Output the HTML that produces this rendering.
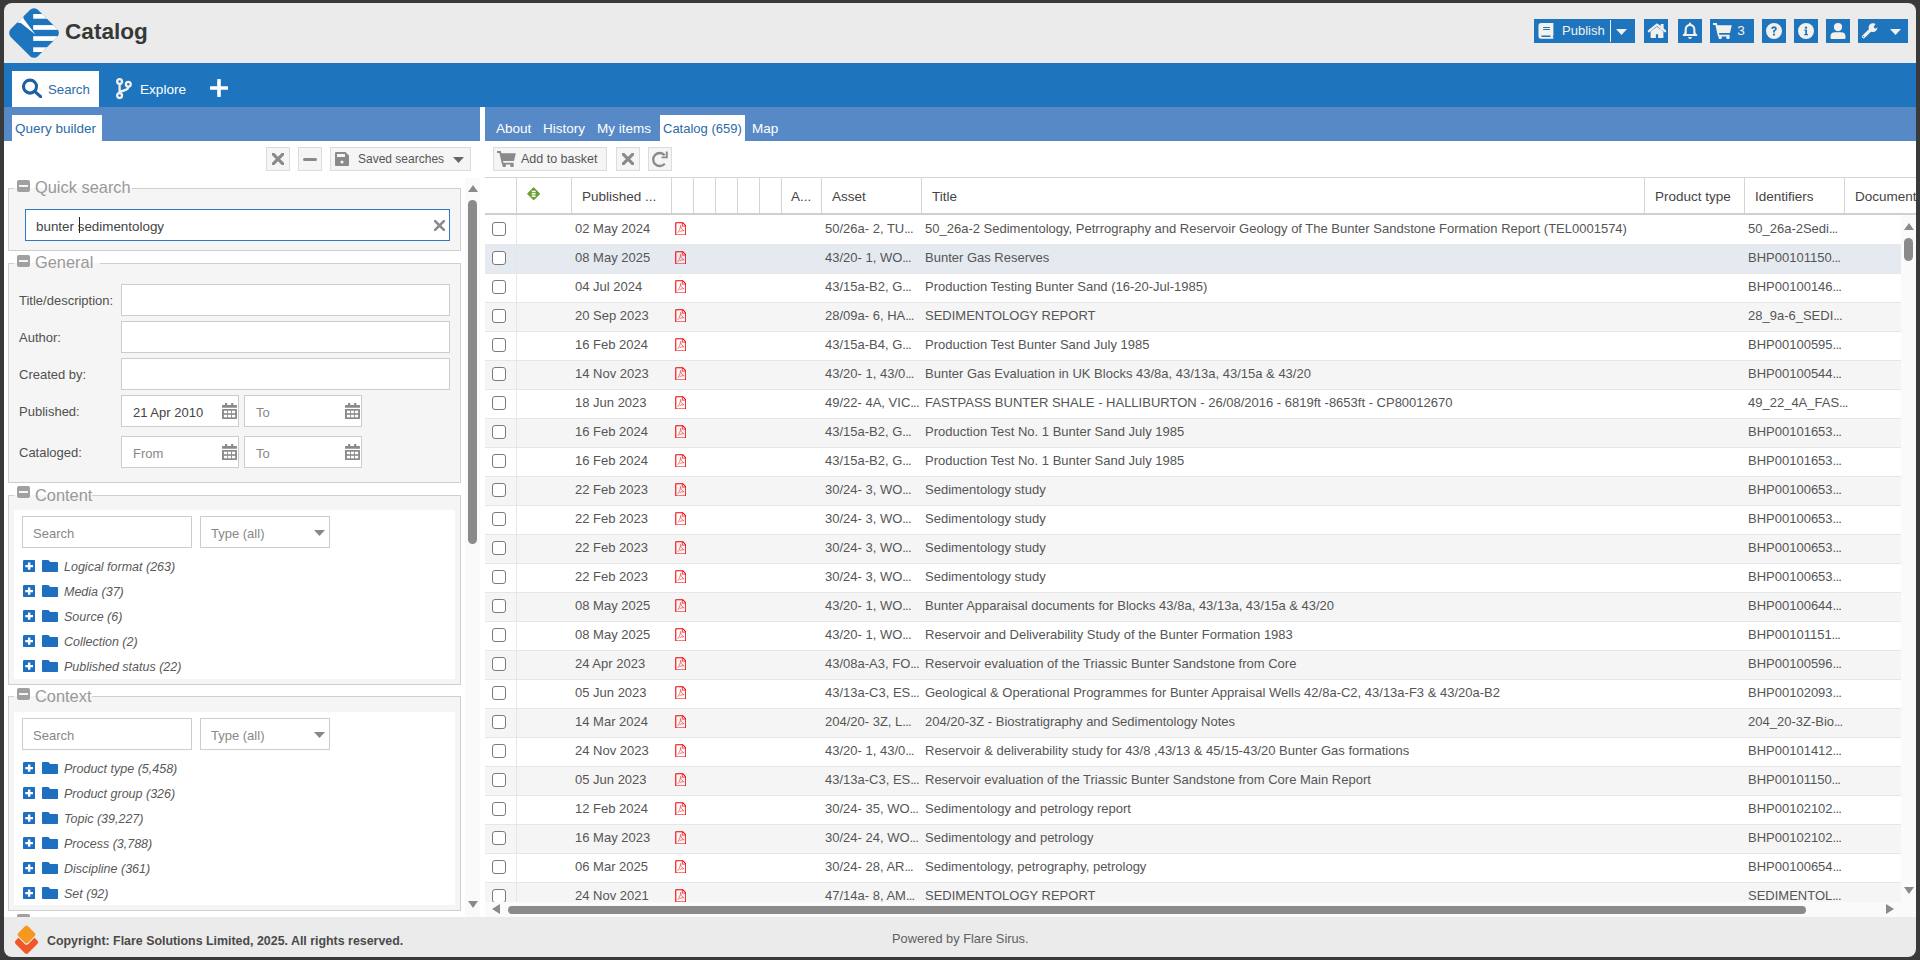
<!DOCTYPE html><html><head><meta charset="utf-8"><title>Catalog</title><style>
*{box-sizing:border-box;margin:0;padding:0}
html,body{width:1920px;height:960px;overflow:hidden}
body{position:relative;background:#fff;font-family:"Liberation Sans",sans-serif;font-size:13px;color:#444}
.a{position:absolute}
.t{position:absolute;white-space:nowrap;line-height:1}
.frame{position:absolute;left:4px;top:3px;width:1912px;height:954px;border-radius:8px;box-shadow:0 0 0 60px #3a3a3a;z-index:1000;pointer-events:none}
.hbtn{position:absolute;top:19px;height:24px;background:#1f74be}
.gbtn{position:absolute;top:147px;height:24px;background:#f5f5f5;border:1px solid #dcdcdc}
.fs{position:absolute;background:#f5f5f5;border:1px solid #cfcfcf}
.leg{position:absolute;color:#999;font-size:16.4px;line-height:1;white-space:nowrap}
.minus{position:absolute;width:13px;height:12px;background:#a0a0a0;border-radius:2px}
.minus:after{content:"";position:absolute;left:2px;top:5px;width:9px;height:2px;background:#f5f5f5}
.inp{position:absolute;background:#fff;border:1px solid #cccccc}
.lbl{position:absolute;white-space:nowrap;line-height:1;color:#505050}
.row{position:absolute;left:485px;width:1416px;height:29px}
.cb{position:absolute;left:7px;top:7px;width:14px;height:14px;border:1px solid #7a7a7a;border-radius:3px;background:#fff}
.cell{position:absolute;top:6px;white-space:nowrap;line-height:15px;color:#555}
.el{letter-spacing:-0.8px}
.hd{position:absolute;top:178px;height:35px;border-left:1px solid #d4d4d4}
.hdt{position:absolute;top:11px;white-space:nowrap;line-height:15px;color:#444;font-size:13.5px}
.ti{position:absolute;height:25px}
.tt{position:absolute;left:64px;top:5px;font-style:italic;color:#5a5a5a;white-space:nowrap;line-height:15px;font-size:12.5px}
</style></head><body>
<div class="frame"></div>
<div class="a " style="left:0px;top:0px;width:1920px;height:63px;background:#ebebeb"></div>
<div class="a" style="left:6px;top:5px;width:56px;height:56px"><svg width="56" height="56" viewBox="0 0 56 56"><defs><clipPath id="lc"><rect x="-19.2" y="-19.2" width="38.4" height="38.4" rx="5.5" transform="translate(28,28) rotate(45)"/></clipPath></defs>
<g clip-path="url(#lc)"><rect x="0" y="0" width="56" height="56" fill="#1f74be"/>
<g fill="#fff"><rect x="27.2" y="9" width="30" height="4.7"/><rect x="27.2" y="20.1" width="30" height="4.7"/><rect x="27.2" y="31.2" width="30" height="4.7"/><rect x="27.2" y="42.3" width="30" height="4.7"/></g>
<path d="M10.5 17.2 L17.2 10.5 L17.6 13.8 L29.4 29.4 L15.2 18.2 Z" fill="#fff"/></g>
</svg></div>
<div class="t" style="left:65px;top:20.5px;font-size:22.6px;font-weight:bold;color:#383838">Catalog</div>
<div class="hbtn" style="left:1534px;width:101px"><svg class="a" style="left:0;top:0" width="24" height="24" viewBox="0 0 24 24"><path d="M7 4 H19.4 V16.4 Q18.9 16.7 18.9 17.5 Q18.9 18.3 19.4 18.6 V19.8 H7 Q4.5 19.8 4.5 17.3 V6.5 Q4.5 4 7 4 Z" fill="#f3f1ec"/><rect x="9" y="8" width="7" height="1.1" rx="0.55" fill="#1f74be"/><rect x="9" y="10" width="7" height="1.1" rx="0.55" fill="#1f74be"/><rect x="7.3" y="16.4" width="9.3" height="1.5" rx="0.7" fill="#1f74be"/></svg><div class="t" style="left:28px;top:5px;font-size:13px;color:#f3f1ec">Publish</div><div class="a" style="left:76px;top:1px;width:1px;height:22px;background:#f3f1ec"></div><svg class="a" style="left:82px;top:10px" width="11" height="6" viewBox="0 0 11 6"><path d="M0 0 H11 L5.5 6 Z" fill="#f3f1ec"/></svg></div>
<div class="hbtn" style="left:1644px;width:24px"><svg class="a" style="left:0;top:0" width="24" height="24" viewBox="0 0 24 24"><rect x="16.6" y="5" width="3" height="5.5" fill="#f3f1ec"/><path d="M4.9 12.2 L13 5.6 L21.1 12.2" fill="none" stroke="#f3f1ec" stroke-width="2.3" stroke-linecap="round" stroke-linejoin="round"/><path d="M6.6 12.6 L13 7.7 L19.4 12.6 V19 H14.1 V15.2 H11.9 V19 H6.6 Z" fill="#f3f1ec"/></svg></div>
<div class="hbtn" style="left:1678px;width:24px"><svg class="a" style="left:0;top:0" width="24" height="24" viewBox="0 0 24 24"><path d="M12 3.6 Q13.2 3.6 13.2 5 Q17.2 6 17.4 10.5 V13 Q17.6 14.6 19.2 15.6 V17 H4.8 V15.6 Q6.4 14.6 6.6 13 V10.5 Q6.8 6 10.8 5 Q10.8 3.6 12 3.6 Z M8.6 15 H15.4 Q15.2 14 15.3 13 V10.6 Q15.2 7.1 12 7.1 Q8.8 7.1 8.7 10.6 V13 Q8.8 14 8.6 15 Z" fill="#f3f1ec" fill-rule="evenodd"/><path d="M10 18 H14 Q13.5 20 12 20 Q10.5 20 10 18 Z" fill="#f3f1ec"/></svg></div>
<div class="hbtn" style="left:1710px;width:44px"><svg class="a" style="left:3px;top:4px" width="19" height="16" viewBox="0 0 19 16"><path d="M0 0 H3.8 L4.4 2.2 H18.8 L17 10 H6 L6.4 11.8 H16.6 V13.6 H5 L2.4 1.9 H0 Z" fill="#f3f1ec"/><circle cx="7.2" cy="14.4" r="1.7" fill="#f3f1ec"/><circle cx="15" cy="14.4" r="1.7" fill="#f3f1ec"/></svg><div class="t" style="left:27.3px;top:5px;font-size:13.6px;color:#f3f1ec">3</div></div>
<div class="hbtn" style="left:1762px;width:24px"><svg class="a" style="left:4px;top:4px" width="16" height="16" viewBox="0 0 16 16"><circle cx="8" cy="8" r="8" fill="#f3f1ec"/><path d="M5.3 6 Q5.3 3.3 8 3.3 Q10.8 3.3 10.8 5.8 Q10.8 7.3 9.2 8 Q8.9 8.2 8.9 8.9 V9.6 H7 V8.7 Q7 7.3 8.3 6.7 Q9 6.4 9 5.8 Q9 5 8 5 Q7.1 5 7.1 6 Z" fill="#1f74be"/><rect x="7" y="10.6" width="1.9" height="1.9" fill="#1f74be"/></svg></div>
<div class="hbtn" style="left:1794px;width:24px"><svg class="a" style="left:4px;top:4px" width="16" height="16" viewBox="0 0 16 16"><circle cx="8" cy="8" r="8" fill="#f3f1ec"/><circle cx="8" cy="4.6" r="1.2" fill="#1f74be"/><path d="M6.3 6.6 H9 V11 H10 V12.3 H6.3 V11 H7.3 V7.8 H6.3 Z" fill="#1f74be"/></svg></div>
<div class="hbtn" style="left:1826px;width:24px"><svg class="a" style="left:4px;top:4px" width="16" height="16" viewBox="0 0 16 16"><circle cx="8" cy="4.1" r="4.1" fill="#f3f1ec"/><path d="M0.5 15 V13.5 Q0.5 9.2 5 9.2 H11 Q15.5 9.2 15.5 13.5 V15 Q15.5 16 14.5 16 H1.5 Q0.5 16 0.5 15 Z" fill="#f3f1ec"/></svg></div>
<div class="hbtn" style="left:1858px;width:50px"><svg class="a" style="left:3px;top:4px" width="18" height="16" viewBox="0 0 18 16"><path d="M2.6 13.6 L9.8 6.6" stroke="#f3f1ec" stroke-width="3.4" stroke-linecap="round"/><circle cx="12" cy="4.6" r="4.4" fill="#f3f1ec"/><path d="M12.6 3.9 L15.6 -0.6 L19 2.8 L14.3 5.8 Z" fill="#1f74be"/><circle cx="2.6" cy="13.6" r="0.6" fill="#1f74be"/></svg><svg class="a" style="left:32px;top:10px" width="11" height="6" viewBox="0 0 11 6"><path d="M0 0 H11 L5.5 6 Z" fill="#f3f1ec"/></svg></div>
<div class="a " style="left:0px;top:63px;width:1920px;height:44px;background:#1f74be"></div>
<div class="a " style="left:12px;top:71px;width:87px;height:36px;background:#fff"></div>
<svg class="a" style="left:22px;top:78px" width="20" height="20" viewBox="0 0 20 20"><circle cx="8" cy="8.6" r="6.5" fill="none" stroke="#1d5f9f" stroke-width="3.1"/><path d="M13 13.6 L18.6 18.6" stroke="#1d5f9f" stroke-width="3.2" stroke-linecap="round"/></svg>
<div class="t" style="left:48px;top:82.6px;font-size:13.2px;color:#2a6ba8">Search</div>
<svg class="a" style="left:114px;top:76px" width="20" height="24" viewBox="0 0 20 24"><g fill="none" stroke="#f3f1ec" stroke-width="2.3"><circle cx="5.6" cy="5.5" r="2.4"/><circle cx="5.6" cy="19.6" r="2.4"/><circle cx="14.3" cy="8.3" r="2.4"/><path d="M5.6 7.8 V17.2"/><path d="M14.3 10.6 Q14.3 13.6 10 14.5 Q6.5 15.2 5.6 16.8"/></g></svg>
<div class="t" style="left:140px;top:82.6px;font-size:13.6px;color:#fff">Explore</div>
<svg class="a" style="left:210px;top:79px" width="18" height="18" viewBox="0 0 18 18"><path d="M9 1 V17 M1 9 H17" stroke="#fff" stroke-width="3.6" stroke-linecap="round"/></svg>
<div class="a " style="left:0px;top:107px;width:480px;height:34px;background:#5789c6"></div>
<div class="a " style="left:485px;top:107px;width:1435px;height:34px;background:#5789c6"></div>
<div class="a " style="left:12px;top:115px;width:90px;height:26px;background:#fff"></div>
<div class="t" style="left:15px;top:122px;font-size:13.5px;color:#2a6ba8">Query builder</div>
<div class="a " style="left:660px;top:115px;width:85px;height:26px;background:#fff"></div>
<div class="t" style="left:496px;top:122px;font-size:13.5px;color:#fff">About</div>
<div class="t" style="left:543px;top:122px;font-size:13.5px;color:#fff">History</div>
<div class="t" style="left:597px;top:122px;font-size:13.5px;color:#fff">My items</div>
<div class="t" style="left:663px;top:122px;font-size:13px;color:#2a6ba8">Catalog (659)</div>
<div class="t" style="left:752px;top:122px;font-size:13.5px;color:#fff">Map</div>
<div class="gbtn" style="left:266px;width:24px"><svg class="a" style="left:5px;top:5px" width="12" height="12" viewBox="0 0 10 10"><path d="M1 1 L9 9 M9 1 L1 9" stroke="#8a8a8a" stroke-width="2.6" stroke-linecap="round"/></svg></div>
<div class="gbtn" style="left:298px;width:24px"><div class="a" style="left:4px;top:10px;width:14px;height:3px;border-radius:1.5px;background:#8a8a8a"></div></div>
<div class="gbtn" style="left:330px;width:141px"><svg class="a" style="left:4px;top:4px" width="14" height="14" viewBox="0 0 14 14"><path d="M1 0 H10.5 L14 3.5 V13 Q14 14 13 14 H1 Q0 14 0 13 V1 Q0 0 1 0 Z M2 2 V5 H10 V2 Z" fill="#8a8a8a" fill-rule="evenodd"/><circle cx="7" cy="10" r="1.6" fill="#f5f5f5"/></svg><div class="t" style="left:27px;top:5.4px;font-size:12px;color:#555">Saved searches</div><svg class="a" style="left:122px;top:9px" width="11" height="6" viewBox="0 0 11 6"><path d="M0 0 H11 L5.5 6 Z" fill="#666"/></svg></div>
<div class="a " style="left:465px;top:178px;width:15px;height:739px;background:#fafafa"></div>
<svg class="a" style="left:468px;top:185px" width="10" height="7" viewBox="0 0 10 7"><path d="M5 0 L10 7 H0 Z" fill="#8a8a8a"/></svg>
<div class="a " style="left:468px;top:200px;width:9px;height:344px;background:#8a8a8a;border-radius:5px"></div>
<svg class="a" style="left:468px;top:901px" width="10" height="7" viewBox="0 0 10 7"><path d="M0 0 H10 L5 7 Z" fill="#8a8a8a"/></svg>
<div class="fs" style="left:8px;top:188px;width:453px;height:63px"></div><div class="a" style="left:14px;top:188px;width:118px;height:1px;background:#f5f5f5"></div><div class="minus" style="left:17px;top:180px"></div><div class="leg" style="left:35px;top:179px">Quick search</div>
<div class="inp" style="left:25px;top:209px;width:425px;height:32px;border:1px solid #2a7ac4"></div>
<div class="t" style="left:36px;top:220px;font-size:13.4px;color:#444">bunter sedimentology</div>
<div class="a " style="left:79px;top:217px;width:1px;height:16px;background:#222"></div>
<svg class="a" style="left:434px;top:220px" width="11" height="11" viewBox="0 0 10 10"><path d="M1 1 L9 9 M9 1 L1 9" stroke="#8a8a8a" stroke-width="2.4" stroke-linecap="round"/></svg>
<div class="fs" style="left:8px;top:263px;width:453px;height:220px"></div><div class="a" style="left:14px;top:263px;width:86px;height:1px;background:#f5f5f5"></div><div class="minus" style="left:17px;top:255px"></div><div class="leg" style="left:35px;top:254px">General</div>
<div class="inp" style="left:121px;top:284px;width:329px;height:32px"></div>
<div class="lbl" style="left:19px;top:294px">Title/description:</div>
<div class="inp" style="left:121px;top:321px;width:329px;height:32px"></div>
<div class="lbl" style="left:19px;top:331px">Author:</div>
<div class="inp" style="left:121px;top:358px;width:329px;height:32px"></div>
<div class="lbl" style="left:19px;top:368px">Created by:</div>
<div class="lbl" style="left:19px;top:405px">Published:</div>
<div class="inp" style="left:121px;top:395px;width:118px;height:32px"></div>
<div class="inp" style="left:244px;top:395px;width:118px;height:32px"></div>
<div class="t" style="left:133px;top:406px;color:#444">21 Apr 2010</div>
<div class="t" style="left:256px;top:406px;color:#888">To</div>
<svg class="a" style="left:222px;top:403px" width="15" height="16" viewBox="0 0 15 16"><g fill="#8a8a8a"><rect x="3" y="0" width="2.2" height="2.6"/><rect x="9.1" y="0" width="2.2" height="2.6"/><rect x="0" y="2" width="15" height="2.8" rx="0.6"/><rect x="0" y="6.1" width="15" height="9.8" rx="0.6"/></g><g fill="#fff"><rect x="1.9" y="7.7" width="3.2" height="2.5"/><rect x="5.9" y="7.7" width="3.2" height="2.5"/><rect x="10" y="7.7" width="3.2" height="2.5"/><rect x="1.9" y="11.8" width="3.2" height="2.5"/><rect x="5.9" y="11.8" width="3.2" height="2.5"/><rect x="10" y="11.8" width="3.2" height="2.5"/></g></svg>
<svg class="a" style="left:345px;top:403px" width="15" height="16" viewBox="0 0 15 16"><g fill="#8a8a8a"><rect x="3" y="0" width="2.2" height="2.6"/><rect x="9.1" y="0" width="2.2" height="2.6"/><rect x="0" y="2" width="15" height="2.8" rx="0.6"/><rect x="0" y="6.1" width="15" height="9.8" rx="0.6"/></g><g fill="#fff"><rect x="1.9" y="7.7" width="3.2" height="2.5"/><rect x="5.9" y="7.7" width="3.2" height="2.5"/><rect x="10" y="7.7" width="3.2" height="2.5"/><rect x="1.9" y="11.8" width="3.2" height="2.5"/><rect x="5.9" y="11.8" width="3.2" height="2.5"/><rect x="10" y="11.8" width="3.2" height="2.5"/></g></svg>
<div class="lbl" style="left:19px;top:446px">Cataloged:</div>
<div class="inp" style="left:121px;top:436px;width:118px;height:32px"></div>
<div class="inp" style="left:244px;top:436px;width:118px;height:32px"></div>
<div class="t" style="left:133px;top:447px;color:#888">From</div>
<div class="t" style="left:256px;top:447px;color:#888">To</div>
<svg class="a" style="left:222px;top:444px" width="15" height="16" viewBox="0 0 15 16"><g fill="#8a8a8a"><rect x="3" y="0" width="2.2" height="2.6"/><rect x="9.1" y="0" width="2.2" height="2.6"/><rect x="0" y="2" width="15" height="2.8" rx="0.6"/><rect x="0" y="6.1" width="15" height="9.8" rx="0.6"/></g><g fill="#fff"><rect x="1.9" y="7.7" width="3.2" height="2.5"/><rect x="5.9" y="7.7" width="3.2" height="2.5"/><rect x="10" y="7.7" width="3.2" height="2.5"/><rect x="1.9" y="11.8" width="3.2" height="2.5"/><rect x="5.9" y="11.8" width="3.2" height="2.5"/><rect x="10" y="11.8" width="3.2" height="2.5"/></g></svg>
<svg class="a" style="left:345px;top:444px" width="15" height="16" viewBox="0 0 15 16"><g fill="#8a8a8a"><rect x="3" y="0" width="2.2" height="2.6"/><rect x="9.1" y="0" width="2.2" height="2.6"/><rect x="0" y="2" width="15" height="2.8" rx="0.6"/><rect x="0" y="6.1" width="15" height="9.8" rx="0.6"/></g><g fill="#fff"><rect x="1.9" y="7.7" width="3.2" height="2.5"/><rect x="5.9" y="7.7" width="3.2" height="2.5"/><rect x="10" y="7.7" width="3.2" height="2.5"/><rect x="1.9" y="11.8" width="3.2" height="2.5"/><rect x="5.9" y="11.8" width="3.2" height="2.5"/><rect x="10" y="11.8" width="3.2" height="2.5"/></g></svg>
<div class="fs" style="left:8px;top:495px;width:453px;height:190px"></div><div class="a" style="left:14px;top:495px;width:78px;height:1px;background:#f5f5f5"></div><div class="minus" style="left:17px;top:486px"></div><div class="leg" style="left:35px;top:486.5px">Content</div>
<div class="a " style="left:14px;top:510px;width:441px;height:169px;background:#fff"></div>
<div class="inp" style="left:22px;top:516px;width:170px;height:32px"></div><div class="t" style="left:33px;top:527px;color:#888">Search</div>
<div class="inp" style="left:200px;top:516px;width:130px;height:32px"></div><div class="t" style="left:211px;top:527px;color:#888">Type (all)</div><svg class="a" style="left:314px;top:530px" width="11" height="6" viewBox="0 0 11 6"><path d="M0 0 H11 L5.5 6 Z" fill="#888"/></svg>
<div class="ti" style="left:23px;top:560px;width:300px"><svg class="a" style="left:0.2px;top:-0.3px" width="12.3" height="12.2" viewBox="0 0 12.3 12.2"><rect width="12.3" height="12.2" rx="1.3" fill="#1f6fc0"/><path d="M6.15 2.4 V9.8 M2.3 6.1 H10" stroke="#fff" stroke-width="2.4"/></svg><svg class="a" style="left:19px;top:-0.1px" width="16" height="12" viewBox="0 0 16 12"><path d="M0 0.8 Q0 0 0.8 0 H6.4 L8.2 2.1 H15.2 Q16 2.1 16 2.9 V11.2 Q16 12 15.2 12 H0.8 Q0 12 0 11.2 Z" fill="#1f6fc0"/></svg><div class="tt" style="left:41px;top:0px">Logical format (263)</div></div><div class="ti" style="left:23px;top:585px;width:300px"><svg class="a" style="left:0.2px;top:-0.3px" width="12.3" height="12.2" viewBox="0 0 12.3 12.2"><rect width="12.3" height="12.2" rx="1.3" fill="#1f6fc0"/><path d="M6.15 2.4 V9.8 M2.3 6.1 H10" stroke="#fff" stroke-width="2.4"/></svg><svg class="a" style="left:19px;top:-0.1px" width="16" height="12" viewBox="0 0 16 12"><path d="M0 0.8 Q0 0 0.8 0 H6.4 L8.2 2.1 H15.2 Q16 2.1 16 2.9 V11.2 Q16 12 15.2 12 H0.8 Q0 12 0 11.2 Z" fill="#1f6fc0"/></svg><div class="tt" style="left:41px;top:0px">Media (37)</div></div><div class="ti" style="left:23px;top:610px;width:300px"><svg class="a" style="left:0.2px;top:-0.3px" width="12.3" height="12.2" viewBox="0 0 12.3 12.2"><rect width="12.3" height="12.2" rx="1.3" fill="#1f6fc0"/><path d="M6.15 2.4 V9.8 M2.3 6.1 H10" stroke="#fff" stroke-width="2.4"/></svg><svg class="a" style="left:19px;top:-0.1px" width="16" height="12" viewBox="0 0 16 12"><path d="M0 0.8 Q0 0 0.8 0 H6.4 L8.2 2.1 H15.2 Q16 2.1 16 2.9 V11.2 Q16 12 15.2 12 H0.8 Q0 12 0 11.2 Z" fill="#1f6fc0"/></svg><div class="tt" style="left:41px;top:0px">Source (6)</div></div><div class="ti" style="left:23px;top:635px;width:300px"><svg class="a" style="left:0.2px;top:-0.3px" width="12.3" height="12.2" viewBox="0 0 12.3 12.2"><rect width="12.3" height="12.2" rx="1.3" fill="#1f6fc0"/><path d="M6.15 2.4 V9.8 M2.3 6.1 H10" stroke="#fff" stroke-width="2.4"/></svg><svg class="a" style="left:19px;top:-0.1px" width="16" height="12" viewBox="0 0 16 12"><path d="M0 0.8 Q0 0 0.8 0 H6.4 L8.2 2.1 H15.2 Q16 2.1 16 2.9 V11.2 Q16 12 15.2 12 H0.8 Q0 12 0 11.2 Z" fill="#1f6fc0"/></svg><div class="tt" style="left:41px;top:0px">Collection (2)</div></div><div class="ti" style="left:23px;top:660px;width:300px"><svg class="a" style="left:0.2px;top:-0.3px" width="12.3" height="12.2" viewBox="0 0 12.3 12.2"><rect width="12.3" height="12.2" rx="1.3" fill="#1f6fc0"/><path d="M6.15 2.4 V9.8 M2.3 6.1 H10" stroke="#fff" stroke-width="2.4"/></svg><svg class="a" style="left:19px;top:-0.1px" width="16" height="12" viewBox="0 0 16 12"><path d="M0 0.8 Q0 0 0.8 0 H6.4 L8.2 2.1 H15.2 Q16 2.1 16 2.9 V11.2 Q16 12 15.2 12 H0.8 Q0 12 0 11.2 Z" fill="#1f6fc0"/></svg><div class="tt" style="left:41px;top:0px">Published status (22)</div></div>
<div class="fs" style="left:8px;top:696px;width:453px;height:215px"></div><div class="a" style="left:14px;top:696px;width:78px;height:1px;background:#f5f5f5"></div><div class="minus" style="left:17px;top:688px"></div><div class="leg" style="left:35px;top:688.2px">Context</div>
<div class="a " style="left:14px;top:712px;width:441px;height:193px;background:#fff"></div>
<div class="inp" style="left:22px;top:718px;width:170px;height:32px"></div><div class="t" style="left:33px;top:729px;color:#888">Search</div>
<div class="inp" style="left:200px;top:718px;width:130px;height:32px"></div><div class="t" style="left:211px;top:729px;color:#888">Type (all)</div><svg class="a" style="left:314px;top:732px" width="11" height="6" viewBox="0 0 11 6"><path d="M0 0 H11 L5.5 6 Z" fill="#888"/></svg>
<div class="ti" style="left:23px;top:762px;width:300px"><svg class="a" style="left:0.2px;top:-0.3px" width="12.3" height="12.2" viewBox="0 0 12.3 12.2"><rect width="12.3" height="12.2" rx="1.3" fill="#1f6fc0"/><path d="M6.15 2.4 V9.8 M2.3 6.1 H10" stroke="#fff" stroke-width="2.4"/></svg><svg class="a" style="left:19px;top:-0.1px" width="16" height="12" viewBox="0 0 16 12"><path d="M0 0.8 Q0 0 0.8 0 H6.4 L8.2 2.1 H15.2 Q16 2.1 16 2.9 V11.2 Q16 12 15.2 12 H0.8 Q0 12 0 11.2 Z" fill="#1f6fc0"/></svg><div class="tt" style="left:41px;top:0px">Product type (5,458)</div></div><div class="ti" style="left:23px;top:787px;width:300px"><svg class="a" style="left:0.2px;top:-0.3px" width="12.3" height="12.2" viewBox="0 0 12.3 12.2"><rect width="12.3" height="12.2" rx="1.3" fill="#1f6fc0"/><path d="M6.15 2.4 V9.8 M2.3 6.1 H10" stroke="#fff" stroke-width="2.4"/></svg><svg class="a" style="left:19px;top:-0.1px" width="16" height="12" viewBox="0 0 16 12"><path d="M0 0.8 Q0 0 0.8 0 H6.4 L8.2 2.1 H15.2 Q16 2.1 16 2.9 V11.2 Q16 12 15.2 12 H0.8 Q0 12 0 11.2 Z" fill="#1f6fc0"/></svg><div class="tt" style="left:41px;top:0px">Product group (326)</div></div><div class="ti" style="left:23px;top:812px;width:300px"><svg class="a" style="left:0.2px;top:-0.3px" width="12.3" height="12.2" viewBox="0 0 12.3 12.2"><rect width="12.3" height="12.2" rx="1.3" fill="#1f6fc0"/><path d="M6.15 2.4 V9.8 M2.3 6.1 H10" stroke="#fff" stroke-width="2.4"/></svg><svg class="a" style="left:19px;top:-0.1px" width="16" height="12" viewBox="0 0 16 12"><path d="M0 0.8 Q0 0 0.8 0 H6.4 L8.2 2.1 H15.2 Q16 2.1 16 2.9 V11.2 Q16 12 15.2 12 H0.8 Q0 12 0 11.2 Z" fill="#1f6fc0"/></svg><div class="tt" style="left:41px;top:0px">Topic (39,227)</div></div><div class="ti" style="left:23px;top:837px;width:300px"><svg class="a" style="left:0.2px;top:-0.3px" width="12.3" height="12.2" viewBox="0 0 12.3 12.2"><rect width="12.3" height="12.2" rx="1.3" fill="#1f6fc0"/><path d="M6.15 2.4 V9.8 M2.3 6.1 H10" stroke="#fff" stroke-width="2.4"/></svg><svg class="a" style="left:19px;top:-0.1px" width="16" height="12" viewBox="0 0 16 12"><path d="M0 0.8 Q0 0 0.8 0 H6.4 L8.2 2.1 H15.2 Q16 2.1 16 2.9 V11.2 Q16 12 15.2 12 H0.8 Q0 12 0 11.2 Z" fill="#1f6fc0"/></svg><div class="tt" style="left:41px;top:0px">Process (3,788)</div></div><div class="ti" style="left:23px;top:862px;width:300px"><svg class="a" style="left:0.2px;top:-0.3px" width="12.3" height="12.2" viewBox="0 0 12.3 12.2"><rect width="12.3" height="12.2" rx="1.3" fill="#1f6fc0"/><path d="M6.15 2.4 V9.8 M2.3 6.1 H10" stroke="#fff" stroke-width="2.4"/></svg><svg class="a" style="left:19px;top:-0.1px" width="16" height="12" viewBox="0 0 16 12"><path d="M0 0.8 Q0 0 0.8 0 H6.4 L8.2 2.1 H15.2 Q16 2.1 16 2.9 V11.2 Q16 12 15.2 12 H0.8 Q0 12 0 11.2 Z" fill="#1f6fc0"/></svg><div class="tt" style="left:41px;top:0px">Discipline (361)</div></div><div class="ti" style="left:23px;top:887px;width:300px"><svg class="a" style="left:0.2px;top:-0.3px" width="12.3" height="12.2" viewBox="0 0 12.3 12.2"><rect width="12.3" height="12.2" rx="1.3" fill="#1f6fc0"/><path d="M6.15 2.4 V9.8 M2.3 6.1 H10" stroke="#fff" stroke-width="2.4"/></svg><svg class="a" style="left:19px;top:-0.1px" width="16" height="12" viewBox="0 0 16 12"><path d="M0 0.8 Q0 0 0.8 0 H6.4 L8.2 2.1 H15.2 Q16 2.1 16 2.9 V11.2 Q16 12 15.2 12 H0.8 Q0 12 0 11.2 Z" fill="#1f6fc0"/></svg><div class="tt" style="left:41px;top:0px">Set (92)</div></div>
<div class="minus" style="left:17px;top:914px"></div>
<div class="gbtn" style="left:493px;width:114px"><svg class="a" style="left:3px;top:3px" width="19" height="16" viewBox="0 0 19 16"><path d="M0 0 H3.8 L4.4 2.2 H18.8 L17 10 H6 L6.4 11.8 H16.6 V13.6 H5 L2.4 1.9 H0 Z" fill="#8a8a8a"/><circle cx="7.2" cy="14.4" r="1.8" fill="#8a8a8a"/><circle cx="15" cy="14.4" r="1.8" fill="#8a8a8a"/></svg><div class="t" style="left:27px;top:5px;font-size:12.5px;color:#555">Add to basket</div></div>
<div class="gbtn" style="left:616px;width:24px"><svg class="a" style="left:5px;top:5px" width="12" height="12" viewBox="0 0 10 10"><path d="M1 1 L9 9 M9 1 L1 9" stroke="#8a8a8a" stroke-width="2.6" stroke-linecap="round"/></svg></div>
<div class="gbtn" style="left:648px;width:24px"><svg class="a" style="left:0px;top:0px" width="22" height="22" viewBox="0 0 22 22"><path d="M15.6 7.2 A6.5 6.5 0 1 0 15.8 15.6" fill="none" stroke="#8a8a8a" stroke-width="2.3"/><path d="M18.7 3.6 V10.3 H12.6 V8.4 H16.8 V3.6 Z" fill="#8a8a8a"/></svg></div>
<div class="a " style="left:485px;top:177px;width:1431px;height:1px;background:#d4d4d4"></div>
<div class="a " style="left:485px;top:213px;width:1431px;height:2px;background:#d0d0d0"></div>
<div class="a " style="left:516px;top:178px;width:1px;height:35px;background:#d4d4d4"></div>
<div class="a " style="left:571px;top:178px;width:1px;height:35px;background:#d4d4d4"></div>
<div class="a " style="left:671px;top:178px;width:1px;height:35px;background:#d4d4d4"></div>
<div class="a " style="left:693px;top:178px;width:1px;height:35px;background:#d4d4d4"></div>
<div class="a " style="left:715px;top:178px;width:1px;height:35px;background:#d4d4d4"></div>
<div class="a " style="left:737px;top:178px;width:1px;height:35px;background:#d4d4d4"></div>
<div class="a " style="left:759px;top:178px;width:1px;height:35px;background:#d4d4d4"></div>
<div class="a " style="left:781px;top:178px;width:1px;height:35px;background:#d4d4d4"></div>
<div class="a " style="left:821px;top:178px;width:1px;height:35px;background:#d4d4d4"></div>
<div class="a " style="left:921px;top:178px;width:1px;height:35px;background:#d4d4d4"></div>
<div class="a " style="left:1644px;top:178px;width:1px;height:35px;background:#d4d4d4"></div>
<div class="a " style="left:1744px;top:178px;width:1px;height:35px;background:#d4d4d4"></div>
<div class="a " style="left:1844px;top:178px;width:1px;height:35px;background:#d4d4d4"></div>
<svg class="a" style="left:527px;top:187.4px" width="13.3" height="13.6" viewBox="0 0 14 14"><path d="M7 0.5 L13.5 7 L7 13.5 L0.5 7 Z" fill="#6b9e35" stroke="#6b9e35" stroke-linejoin="round"/><rect x="5" y="3.7" width="4" height="1.6" fill="#fff"/><rect x="5" y="6.2" width="4" height="1.6" fill="#fff"/><rect x="5" y="8.7" width="4" height="1.6" fill="#fff"/></svg>
<div class="t" style="left:582px;top:190px;font-size:13.5px;color:#444">Published ...</div>
<div class="t" style="left:791px;top:190px;font-size:13.5px;color:#444">A...</div>
<div class="t" style="left:832px;top:190px;font-size:13.5px;color:#444">Asset</div>
<div class="t" style="left:932px;top:190px;font-size:13.5px;color:#444">Title</div>
<div class="t" style="left:1655px;top:190px;font-size:13.5px;color:#444">Product type</div>
<div class="t" style="left:1755px;top:190px;font-size:13.5px;color:#444">Identifiers</div>
<div class="t" style="left:1855px;top:190px;font-size:13.5px;color:#444">Document</div>
<div class="row" style="top:215px;height:29px;background:#fff;overflow:hidden"><div class="a" style="left:31px;top:0;width:1px;height:29px;background:#e6e6e6"></div><div class="cb" style="top:7px"></div><div class="cell" style="left:90px">02 May 2024</div><svg class="a" style="left:189.5px;top:6.5px" width="11.5" height="13.6" viewBox="0 0 12 14"><path d="M0.8 0.6 H8 L11.2 3.8 V13.4 H0.8 Z" fill="none" stroke="#f20000" stroke-width="1.1" stroke-linejoin="round"/><path d="M7.6 0.8 V4.2 H11" fill="none" stroke="#f20000" stroke-width="0.8"/><path d="M2.8 11.2 Q4.8 9 5.5 6 Q5.8 4 5.7 3.5 Q5.9 7 8.8 8.8 Q9.8 9.4 9.1 9.1 Q7 8.7 4.8 10" fill="none" stroke="#f03a3a" stroke-width="0.7"/></svg><div class="cell" style="left:340px">50/26a- 2, TU<span class=el>...</span></div><div class="cell" style="left:440px">50_26a-2 Sedimentology, Petrrography and Reservoir Geology of The Bunter Sandstone Formation Report (TEL0001574)</div><div class="cell" style="left:1263px">50_26a-2Sedi<span class=el>...</span></div></div>
<div class="row" style="top:244px;height:29px;background:#e5eaf1;box-shadow:inset 0 1px 0 #e6e6e6;overflow:hidden"><div class="a" style="left:31px;top:0;width:1px;height:29px;background:#e6e6e6"></div><div class="cb" style="top:7px"></div><div class="cell" style="left:90px">08 May 2025</div><svg class="a" style="left:189.5px;top:6.5px" width="11.5" height="13.6" viewBox="0 0 12 14"><path d="M0.8 0.6 H8 L11.2 3.8 V13.4 H0.8 Z" fill="none" stroke="#f20000" stroke-width="1.1" stroke-linejoin="round"/><path d="M7.6 0.8 V4.2 H11" fill="none" stroke="#f20000" stroke-width="0.8"/><path d="M2.8 11.2 Q4.8 9 5.5 6 Q5.8 4 5.7 3.5 Q5.9 7 8.8 8.8 Q9.8 9.4 9.1 9.1 Q7 8.7 4.8 10" fill="none" stroke="#f03a3a" stroke-width="0.7"/></svg><div class="cell" style="left:340px">43/20- 1, WO<span class=el>...</span></div><div class="cell" style="left:440px">Bunter Gas Reserves</div><div class="cell" style="left:1263px">BHP00101150<span class=el>...</span></div></div>
<div class="row" style="top:273px;height:29px;background:#fff;box-shadow:inset 0 1px 0 #e6e6e6;overflow:hidden"><div class="a" style="left:31px;top:0;width:1px;height:29px;background:#e6e6e6"></div><div class="cb" style="top:7px"></div><div class="cell" style="left:90px">04 Jul 2024</div><svg class="a" style="left:189.5px;top:6.5px" width="11.5" height="13.6" viewBox="0 0 12 14"><path d="M0.8 0.6 H8 L11.2 3.8 V13.4 H0.8 Z" fill="none" stroke="#f20000" stroke-width="1.1" stroke-linejoin="round"/><path d="M7.6 0.8 V4.2 H11" fill="none" stroke="#f20000" stroke-width="0.8"/><path d="M2.8 11.2 Q4.8 9 5.5 6 Q5.8 4 5.7 3.5 Q5.9 7 8.8 8.8 Q9.8 9.4 9.1 9.1 Q7 8.7 4.8 10" fill="none" stroke="#f03a3a" stroke-width="0.7"/></svg><div class="cell" style="left:340px">43/15a-B2, G<span class=el>...</span></div><div class="cell" style="left:440px">Production Testing Bunter Sand (16-20-Jul-1985)</div><div class="cell" style="left:1263px">BHP00100146<span class=el>...</span></div></div>
<div class="row" style="top:302px;height:29px;background:#f5f5f5;box-shadow:inset 0 1px 0 #e6e6e6;overflow:hidden"><div class="a" style="left:31px;top:0;width:1px;height:29px;background:#e6e6e6"></div><div class="cb" style="top:7px"></div><div class="cell" style="left:90px">20 Sep 2023</div><svg class="a" style="left:189.5px;top:6.5px" width="11.5" height="13.6" viewBox="0 0 12 14"><path d="M0.8 0.6 H8 L11.2 3.8 V13.4 H0.8 Z" fill="none" stroke="#f20000" stroke-width="1.1" stroke-linejoin="round"/><path d="M7.6 0.8 V4.2 H11" fill="none" stroke="#f20000" stroke-width="0.8"/><path d="M2.8 11.2 Q4.8 9 5.5 6 Q5.8 4 5.7 3.5 Q5.9 7 8.8 8.8 Q9.8 9.4 9.1 9.1 Q7 8.7 4.8 10" fill="none" stroke="#f03a3a" stroke-width="0.7"/></svg><div class="cell" style="left:340px">28/09a- 6, HA<span class=el>...</span></div><div class="cell" style="left:440px">SEDIMENTOLOGY REPORT</div><div class="cell" style="left:1263px">28_9a-6_SEDI<span class=el>...</span></div></div>
<div class="row" style="top:331px;height:29px;background:#fff;box-shadow:inset 0 1px 0 #e6e6e6;overflow:hidden"><div class="a" style="left:31px;top:0;width:1px;height:29px;background:#e6e6e6"></div><div class="cb" style="top:7px"></div><div class="cell" style="left:90px">16 Feb 2024</div><svg class="a" style="left:189.5px;top:6.5px" width="11.5" height="13.6" viewBox="0 0 12 14"><path d="M0.8 0.6 H8 L11.2 3.8 V13.4 H0.8 Z" fill="none" stroke="#f20000" stroke-width="1.1" stroke-linejoin="round"/><path d="M7.6 0.8 V4.2 H11" fill="none" stroke="#f20000" stroke-width="0.8"/><path d="M2.8 11.2 Q4.8 9 5.5 6 Q5.8 4 5.7 3.5 Q5.9 7 8.8 8.8 Q9.8 9.4 9.1 9.1 Q7 8.7 4.8 10" fill="none" stroke="#f03a3a" stroke-width="0.7"/></svg><div class="cell" style="left:340px">43/15a-B4, G<span class=el>...</span></div><div class="cell" style="left:440px">Production Test Bunter Sand July 1985</div><div class="cell" style="left:1263px">BHP00100595<span class=el>...</span></div></div>
<div class="row" style="top:360px;height:29px;background:#f5f5f5;box-shadow:inset 0 1px 0 #e6e6e6;overflow:hidden"><div class="a" style="left:31px;top:0;width:1px;height:29px;background:#e6e6e6"></div><div class="cb" style="top:7px"></div><div class="cell" style="left:90px">14 Nov 2023</div><svg class="a" style="left:189.5px;top:6.5px" width="11.5" height="13.6" viewBox="0 0 12 14"><path d="M0.8 0.6 H8 L11.2 3.8 V13.4 H0.8 Z" fill="none" stroke="#f20000" stroke-width="1.1" stroke-linejoin="round"/><path d="M7.6 0.8 V4.2 H11" fill="none" stroke="#f20000" stroke-width="0.8"/><path d="M2.8 11.2 Q4.8 9 5.5 6 Q5.8 4 5.7 3.5 Q5.9 7 8.8 8.8 Q9.8 9.4 9.1 9.1 Q7 8.7 4.8 10" fill="none" stroke="#f03a3a" stroke-width="0.7"/></svg><div class="cell" style="left:340px">43/20- 1, 43/0<span class=el>...</span></div><div class="cell" style="left:440px">Bunter Gas Evaluation in UK Blocks 43/8a, 43/13a, 43/15a &amp; 43/20</div><div class="cell" style="left:1263px">BHP00100544<span class=el>...</span></div></div>
<div class="row" style="top:389px;height:29px;background:#fff;box-shadow:inset 0 1px 0 #e6e6e6;overflow:hidden"><div class="a" style="left:31px;top:0;width:1px;height:29px;background:#e6e6e6"></div><div class="cb" style="top:7px"></div><div class="cell" style="left:90px">18 Jun 2023</div><svg class="a" style="left:189.5px;top:6.5px" width="11.5" height="13.6" viewBox="0 0 12 14"><path d="M0.8 0.6 H8 L11.2 3.8 V13.4 H0.8 Z" fill="none" stroke="#f20000" stroke-width="1.1" stroke-linejoin="round"/><path d="M7.6 0.8 V4.2 H11" fill="none" stroke="#f20000" stroke-width="0.8"/><path d="M2.8 11.2 Q4.8 9 5.5 6 Q5.8 4 5.7 3.5 Q5.9 7 8.8 8.8 Q9.8 9.4 9.1 9.1 Q7 8.7 4.8 10" fill="none" stroke="#f03a3a" stroke-width="0.7"/></svg><div class="cell" style="left:340px">49/22- 4A, VIC<span class=el>...</span></div><div class="cell" style="left:440px">FASTPASS BUNTER SHALE - HALLIBURTON - 26/08/2016 - 6819ft -8653ft - CP80012670</div><div class="cell" style="left:1263px">49_22_4A_FAS<span class=el>...</span></div></div>
<div class="row" style="top:418px;height:29px;background:#f5f5f5;box-shadow:inset 0 1px 0 #e6e6e6;overflow:hidden"><div class="a" style="left:31px;top:0;width:1px;height:29px;background:#e6e6e6"></div><div class="cb" style="top:7px"></div><div class="cell" style="left:90px">16 Feb 2024</div><svg class="a" style="left:189.5px;top:6.5px" width="11.5" height="13.6" viewBox="0 0 12 14"><path d="M0.8 0.6 H8 L11.2 3.8 V13.4 H0.8 Z" fill="none" stroke="#f20000" stroke-width="1.1" stroke-linejoin="round"/><path d="M7.6 0.8 V4.2 H11" fill="none" stroke="#f20000" stroke-width="0.8"/><path d="M2.8 11.2 Q4.8 9 5.5 6 Q5.8 4 5.7 3.5 Q5.9 7 8.8 8.8 Q9.8 9.4 9.1 9.1 Q7 8.7 4.8 10" fill="none" stroke="#f03a3a" stroke-width="0.7"/></svg><div class="cell" style="left:340px">43/15a-B2, G<span class=el>...</span></div><div class="cell" style="left:440px">Production Test No. 1 Bunter Sand July 1985</div><div class="cell" style="left:1263px">BHP00101653<span class=el>...</span></div></div>
<div class="row" style="top:447px;height:29px;background:#fff;box-shadow:inset 0 1px 0 #e6e6e6;overflow:hidden"><div class="a" style="left:31px;top:0;width:1px;height:29px;background:#e6e6e6"></div><div class="cb" style="top:7px"></div><div class="cell" style="left:90px">16 Feb 2024</div><svg class="a" style="left:189.5px;top:6.5px" width="11.5" height="13.6" viewBox="0 0 12 14"><path d="M0.8 0.6 H8 L11.2 3.8 V13.4 H0.8 Z" fill="none" stroke="#f20000" stroke-width="1.1" stroke-linejoin="round"/><path d="M7.6 0.8 V4.2 H11" fill="none" stroke="#f20000" stroke-width="0.8"/><path d="M2.8 11.2 Q4.8 9 5.5 6 Q5.8 4 5.7 3.5 Q5.9 7 8.8 8.8 Q9.8 9.4 9.1 9.1 Q7 8.7 4.8 10" fill="none" stroke="#f03a3a" stroke-width="0.7"/></svg><div class="cell" style="left:340px">43/15a-B2, G<span class=el>...</span></div><div class="cell" style="left:440px">Production Test No. 1 Bunter Sand July 1985</div><div class="cell" style="left:1263px">BHP00101653<span class=el>...</span></div></div>
<div class="row" style="top:476px;height:29px;background:#f5f5f5;box-shadow:inset 0 1px 0 #e6e6e6;overflow:hidden"><div class="a" style="left:31px;top:0;width:1px;height:29px;background:#e6e6e6"></div><div class="cb" style="top:7px"></div><div class="cell" style="left:90px">22 Feb 2023</div><svg class="a" style="left:189.5px;top:6.5px" width="11.5" height="13.6" viewBox="0 0 12 14"><path d="M0.8 0.6 H8 L11.2 3.8 V13.4 H0.8 Z" fill="none" stroke="#f20000" stroke-width="1.1" stroke-linejoin="round"/><path d="M7.6 0.8 V4.2 H11" fill="none" stroke="#f20000" stroke-width="0.8"/><path d="M2.8 11.2 Q4.8 9 5.5 6 Q5.8 4 5.7 3.5 Q5.9 7 8.8 8.8 Q9.8 9.4 9.1 9.1 Q7 8.7 4.8 10" fill="none" stroke="#f03a3a" stroke-width="0.7"/></svg><div class="cell" style="left:340px">30/24- 3, WO<span class=el>...</span></div><div class="cell" style="left:440px">Sedimentology study</div><div class="cell" style="left:1263px">BHP00100653<span class=el>...</span></div></div>
<div class="row" style="top:505px;height:29px;background:#fff;box-shadow:inset 0 1px 0 #e6e6e6;overflow:hidden"><div class="a" style="left:31px;top:0;width:1px;height:29px;background:#e6e6e6"></div><div class="cb" style="top:7px"></div><div class="cell" style="left:90px">22 Feb 2023</div><svg class="a" style="left:189.5px;top:6.5px" width="11.5" height="13.6" viewBox="0 0 12 14"><path d="M0.8 0.6 H8 L11.2 3.8 V13.4 H0.8 Z" fill="none" stroke="#f20000" stroke-width="1.1" stroke-linejoin="round"/><path d="M7.6 0.8 V4.2 H11" fill="none" stroke="#f20000" stroke-width="0.8"/><path d="M2.8 11.2 Q4.8 9 5.5 6 Q5.8 4 5.7 3.5 Q5.9 7 8.8 8.8 Q9.8 9.4 9.1 9.1 Q7 8.7 4.8 10" fill="none" stroke="#f03a3a" stroke-width="0.7"/></svg><div class="cell" style="left:340px">30/24- 3, WO<span class=el>...</span></div><div class="cell" style="left:440px">Sedimentology study</div><div class="cell" style="left:1263px">BHP00100653<span class=el>...</span></div></div>
<div class="row" style="top:534px;height:29px;background:#f5f5f5;box-shadow:inset 0 1px 0 #e6e6e6;overflow:hidden"><div class="a" style="left:31px;top:0;width:1px;height:29px;background:#e6e6e6"></div><div class="cb" style="top:7px"></div><div class="cell" style="left:90px">22 Feb 2023</div><svg class="a" style="left:189.5px;top:6.5px" width="11.5" height="13.6" viewBox="0 0 12 14"><path d="M0.8 0.6 H8 L11.2 3.8 V13.4 H0.8 Z" fill="none" stroke="#f20000" stroke-width="1.1" stroke-linejoin="round"/><path d="M7.6 0.8 V4.2 H11" fill="none" stroke="#f20000" stroke-width="0.8"/><path d="M2.8 11.2 Q4.8 9 5.5 6 Q5.8 4 5.7 3.5 Q5.9 7 8.8 8.8 Q9.8 9.4 9.1 9.1 Q7 8.7 4.8 10" fill="none" stroke="#f03a3a" stroke-width="0.7"/></svg><div class="cell" style="left:340px">30/24- 3, WO<span class=el>...</span></div><div class="cell" style="left:440px">Sedimentology study</div><div class="cell" style="left:1263px">BHP00100653<span class=el>...</span></div></div>
<div class="row" style="top:563px;height:29px;background:#fff;box-shadow:inset 0 1px 0 #e6e6e6;overflow:hidden"><div class="a" style="left:31px;top:0;width:1px;height:29px;background:#e6e6e6"></div><div class="cb" style="top:7px"></div><div class="cell" style="left:90px">22 Feb 2023</div><svg class="a" style="left:189.5px;top:6.5px" width="11.5" height="13.6" viewBox="0 0 12 14"><path d="M0.8 0.6 H8 L11.2 3.8 V13.4 H0.8 Z" fill="none" stroke="#f20000" stroke-width="1.1" stroke-linejoin="round"/><path d="M7.6 0.8 V4.2 H11" fill="none" stroke="#f20000" stroke-width="0.8"/><path d="M2.8 11.2 Q4.8 9 5.5 6 Q5.8 4 5.7 3.5 Q5.9 7 8.8 8.8 Q9.8 9.4 9.1 9.1 Q7 8.7 4.8 10" fill="none" stroke="#f03a3a" stroke-width="0.7"/></svg><div class="cell" style="left:340px">30/24- 3, WO<span class=el>...</span></div><div class="cell" style="left:440px">Sedimentology study</div><div class="cell" style="left:1263px">BHP00100653<span class=el>...</span></div></div>
<div class="row" style="top:592px;height:29px;background:#f5f5f5;box-shadow:inset 0 1px 0 #e6e6e6;overflow:hidden"><div class="a" style="left:31px;top:0;width:1px;height:29px;background:#e6e6e6"></div><div class="cb" style="top:7px"></div><div class="cell" style="left:90px">08 May 2025</div><svg class="a" style="left:189.5px;top:6.5px" width="11.5" height="13.6" viewBox="0 0 12 14"><path d="M0.8 0.6 H8 L11.2 3.8 V13.4 H0.8 Z" fill="none" stroke="#f20000" stroke-width="1.1" stroke-linejoin="round"/><path d="M7.6 0.8 V4.2 H11" fill="none" stroke="#f20000" stroke-width="0.8"/><path d="M2.8 11.2 Q4.8 9 5.5 6 Q5.8 4 5.7 3.5 Q5.9 7 8.8 8.8 Q9.8 9.4 9.1 9.1 Q7 8.7 4.8 10" fill="none" stroke="#f03a3a" stroke-width="0.7"/></svg><div class="cell" style="left:340px">43/20- 1, WO<span class=el>...</span></div><div class="cell" style="left:440px">Bunter Apparaisal documents for Blocks 43/8a, 43/13a, 43/15a &amp; 43/20</div><div class="cell" style="left:1263px">BHP00100644<span class=el>...</span></div></div>
<div class="row" style="top:621px;height:29px;background:#fff;box-shadow:inset 0 1px 0 #e6e6e6;overflow:hidden"><div class="a" style="left:31px;top:0;width:1px;height:29px;background:#e6e6e6"></div><div class="cb" style="top:7px"></div><div class="cell" style="left:90px">08 May 2025</div><svg class="a" style="left:189.5px;top:6.5px" width="11.5" height="13.6" viewBox="0 0 12 14"><path d="M0.8 0.6 H8 L11.2 3.8 V13.4 H0.8 Z" fill="none" stroke="#f20000" stroke-width="1.1" stroke-linejoin="round"/><path d="M7.6 0.8 V4.2 H11" fill="none" stroke="#f20000" stroke-width="0.8"/><path d="M2.8 11.2 Q4.8 9 5.5 6 Q5.8 4 5.7 3.5 Q5.9 7 8.8 8.8 Q9.8 9.4 9.1 9.1 Q7 8.7 4.8 10" fill="none" stroke="#f03a3a" stroke-width="0.7"/></svg><div class="cell" style="left:340px">43/20- 1, WO<span class=el>...</span></div><div class="cell" style="left:440px">Reservoir and Deliverability Study of the Bunter Formation 1983</div><div class="cell" style="left:1263px">BHP00101151<span class=el>...</span></div></div>
<div class="row" style="top:650px;height:29px;background:#f5f5f5;box-shadow:inset 0 1px 0 #e6e6e6;overflow:hidden"><div class="a" style="left:31px;top:0;width:1px;height:29px;background:#e6e6e6"></div><div class="cb" style="top:7px"></div><div class="cell" style="left:90px">24 Apr 2023</div><svg class="a" style="left:189.5px;top:6.5px" width="11.5" height="13.6" viewBox="0 0 12 14"><path d="M0.8 0.6 H8 L11.2 3.8 V13.4 H0.8 Z" fill="none" stroke="#f20000" stroke-width="1.1" stroke-linejoin="round"/><path d="M7.6 0.8 V4.2 H11" fill="none" stroke="#f20000" stroke-width="0.8"/><path d="M2.8 11.2 Q4.8 9 5.5 6 Q5.8 4 5.7 3.5 Q5.9 7 8.8 8.8 Q9.8 9.4 9.1 9.1 Q7 8.7 4.8 10" fill="none" stroke="#f03a3a" stroke-width="0.7"/></svg><div class="cell" style="left:340px">43/08a-A3, FO<span class=el>...</span></div><div class="cell" style="left:440px">Reservoir evaluation of the Triassic Bunter Sandstone from Core</div><div class="cell" style="left:1263px">BHP00100596<span class=el>...</span></div></div>
<div class="row" style="top:679px;height:29px;background:#fff;box-shadow:inset 0 1px 0 #e6e6e6;overflow:hidden"><div class="a" style="left:31px;top:0;width:1px;height:29px;background:#e6e6e6"></div><div class="cb" style="top:7px"></div><div class="cell" style="left:90px">05 Jun 2023</div><svg class="a" style="left:189.5px;top:6.5px" width="11.5" height="13.6" viewBox="0 0 12 14"><path d="M0.8 0.6 H8 L11.2 3.8 V13.4 H0.8 Z" fill="none" stroke="#f20000" stroke-width="1.1" stroke-linejoin="round"/><path d="M7.6 0.8 V4.2 H11" fill="none" stroke="#f20000" stroke-width="0.8"/><path d="M2.8 11.2 Q4.8 9 5.5 6 Q5.8 4 5.7 3.5 Q5.9 7 8.8 8.8 Q9.8 9.4 9.1 9.1 Q7 8.7 4.8 10" fill="none" stroke="#f03a3a" stroke-width="0.7"/></svg><div class="cell" style="left:340px">43/13a-C3, ES<span class=el>...</span></div><div class="cell" style="left:440px">Geological &amp; Operational Programmes for Bunter Appraisal Wells 42/8a-C2, 43/13a-F3 &amp; 43/20a-B2</div><div class="cell" style="left:1263px">BHP00102093<span class=el>...</span></div></div>
<div class="row" style="top:708px;height:29px;background:#f5f5f5;box-shadow:inset 0 1px 0 #e6e6e6;overflow:hidden"><div class="a" style="left:31px;top:0;width:1px;height:29px;background:#e6e6e6"></div><div class="cb" style="top:7px"></div><div class="cell" style="left:90px">14 Mar 2024</div><svg class="a" style="left:189.5px;top:6.5px" width="11.5" height="13.6" viewBox="0 0 12 14"><path d="M0.8 0.6 H8 L11.2 3.8 V13.4 H0.8 Z" fill="none" stroke="#f20000" stroke-width="1.1" stroke-linejoin="round"/><path d="M7.6 0.8 V4.2 H11" fill="none" stroke="#f20000" stroke-width="0.8"/><path d="M2.8 11.2 Q4.8 9 5.5 6 Q5.8 4 5.7 3.5 Q5.9 7 8.8 8.8 Q9.8 9.4 9.1 9.1 Q7 8.7 4.8 10" fill="none" stroke="#f03a3a" stroke-width="0.7"/></svg><div class="cell" style="left:340px">204/20- 3Z, L<span class=el>...</span></div><div class="cell" style="left:440px">204/20-3Z - Biostratigraphy and Sedimentology Notes</div><div class="cell" style="left:1263px">204_20-3Z-Bio<span class=el>...</span></div></div>
<div class="row" style="top:737px;height:29px;background:#fff;box-shadow:inset 0 1px 0 #e6e6e6;overflow:hidden"><div class="a" style="left:31px;top:0;width:1px;height:29px;background:#e6e6e6"></div><div class="cb" style="top:7px"></div><div class="cell" style="left:90px">24 Nov 2023</div><svg class="a" style="left:189.5px;top:6.5px" width="11.5" height="13.6" viewBox="0 0 12 14"><path d="M0.8 0.6 H8 L11.2 3.8 V13.4 H0.8 Z" fill="none" stroke="#f20000" stroke-width="1.1" stroke-linejoin="round"/><path d="M7.6 0.8 V4.2 H11" fill="none" stroke="#f20000" stroke-width="0.8"/><path d="M2.8 11.2 Q4.8 9 5.5 6 Q5.8 4 5.7 3.5 Q5.9 7 8.8 8.8 Q9.8 9.4 9.1 9.1 Q7 8.7 4.8 10" fill="none" stroke="#f03a3a" stroke-width="0.7"/></svg><div class="cell" style="left:340px">43/20- 1, 43/0<span class=el>...</span></div><div class="cell" style="left:440px">Reservoir &amp; deliverability study for 43/8 ,43/13 &amp; 45/15-43/20 Bunter Gas formations</div><div class="cell" style="left:1263px">BHP00101412<span class=el>...</span></div></div>
<div class="row" style="top:766px;height:29px;background:#f5f5f5;box-shadow:inset 0 1px 0 #e6e6e6;overflow:hidden"><div class="a" style="left:31px;top:0;width:1px;height:29px;background:#e6e6e6"></div><div class="cb" style="top:7px"></div><div class="cell" style="left:90px">05 Jun 2023</div><svg class="a" style="left:189.5px;top:6.5px" width="11.5" height="13.6" viewBox="0 0 12 14"><path d="M0.8 0.6 H8 L11.2 3.8 V13.4 H0.8 Z" fill="none" stroke="#f20000" stroke-width="1.1" stroke-linejoin="round"/><path d="M7.6 0.8 V4.2 H11" fill="none" stroke="#f20000" stroke-width="0.8"/><path d="M2.8 11.2 Q4.8 9 5.5 6 Q5.8 4 5.7 3.5 Q5.9 7 8.8 8.8 Q9.8 9.4 9.1 9.1 Q7 8.7 4.8 10" fill="none" stroke="#f03a3a" stroke-width="0.7"/></svg><div class="cell" style="left:340px">43/13a-C3, ES<span class=el>...</span></div><div class="cell" style="left:440px">Reservoir evaluation of the Triassic Bunter Sandstone from Core Main Report</div><div class="cell" style="left:1263px">BHP00101150<span class=el>...</span></div></div>
<div class="row" style="top:795px;height:29px;background:#fff;box-shadow:inset 0 1px 0 #e6e6e6;overflow:hidden"><div class="a" style="left:31px;top:0;width:1px;height:29px;background:#e6e6e6"></div><div class="cb" style="top:7px"></div><div class="cell" style="left:90px">12 Feb 2024</div><svg class="a" style="left:189.5px;top:6.5px" width="11.5" height="13.6" viewBox="0 0 12 14"><path d="M0.8 0.6 H8 L11.2 3.8 V13.4 H0.8 Z" fill="none" stroke="#f20000" stroke-width="1.1" stroke-linejoin="round"/><path d="M7.6 0.8 V4.2 H11" fill="none" stroke="#f20000" stroke-width="0.8"/><path d="M2.8 11.2 Q4.8 9 5.5 6 Q5.8 4 5.7 3.5 Q5.9 7 8.8 8.8 Q9.8 9.4 9.1 9.1 Q7 8.7 4.8 10" fill="none" stroke="#f03a3a" stroke-width="0.7"/></svg><div class="cell" style="left:340px">30/24- 35, WO<span class=el>...</span></div><div class="cell" style="left:440px">Sedimentology and petrology report</div><div class="cell" style="left:1263px">BHP00102102<span class=el>...</span></div></div>
<div class="row" style="top:824px;height:29px;background:#f5f5f5;box-shadow:inset 0 1px 0 #e6e6e6;overflow:hidden"><div class="a" style="left:31px;top:0;width:1px;height:29px;background:#e6e6e6"></div><div class="cb" style="top:7px"></div><div class="cell" style="left:90px">16 May 2023</div><svg class="a" style="left:189.5px;top:6.5px" width="11.5" height="13.6" viewBox="0 0 12 14"><path d="M0.8 0.6 H8 L11.2 3.8 V13.4 H0.8 Z" fill="none" stroke="#f20000" stroke-width="1.1" stroke-linejoin="round"/><path d="M7.6 0.8 V4.2 H11" fill="none" stroke="#f20000" stroke-width="0.8"/><path d="M2.8 11.2 Q4.8 9 5.5 6 Q5.8 4 5.7 3.5 Q5.9 7 8.8 8.8 Q9.8 9.4 9.1 9.1 Q7 8.7 4.8 10" fill="none" stroke="#f03a3a" stroke-width="0.7"/></svg><div class="cell" style="left:340px">30/24- 24, WO<span class=el>...</span></div><div class="cell" style="left:440px">Sedimentology and petrology</div><div class="cell" style="left:1263px">BHP00102102<span class=el>...</span></div></div>
<div class="row" style="top:853px;height:29px;background:#fff;box-shadow:inset 0 1px 0 #e6e6e6;overflow:hidden"><div class="a" style="left:31px;top:0;width:1px;height:29px;background:#e6e6e6"></div><div class="cb" style="top:7px"></div><div class="cell" style="left:90px">06 Mar 2025</div><svg class="a" style="left:189.5px;top:6.5px" width="11.5" height="13.6" viewBox="0 0 12 14"><path d="M0.8 0.6 H8 L11.2 3.8 V13.4 H0.8 Z" fill="none" stroke="#f20000" stroke-width="1.1" stroke-linejoin="round"/><path d="M7.6 0.8 V4.2 H11" fill="none" stroke="#f20000" stroke-width="0.8"/><path d="M2.8 11.2 Q4.8 9 5.5 6 Q5.8 4 5.7 3.5 Q5.9 7 8.8 8.8 Q9.8 9.4 9.1 9.1 Q7 8.7 4.8 10" fill="none" stroke="#f03a3a" stroke-width="0.7"/></svg><div class="cell" style="left:340px">30/24- 28, AR<span class=el>...</span></div><div class="cell" style="left:440px">Sedimentology, petrography, petrology</div><div class="cell" style="left:1263px">BHP00100654<span class=el>...</span></div></div>
<div class="row" style="top:882px;height:20px;background:#f5f5f5;box-shadow:inset 0 1px 0 #e6e6e6;overflow:hidden"><div class="a" style="left:31px;top:0;width:1px;height:29px;background:#e6e6e6"></div><div class="cb" style="top:7px"></div><div class="cell" style="left:90px">24 Nov 2021</div><svg class="a" style="left:189.5px;top:6.5px" width="11.5" height="13.6" viewBox="0 0 12 14"><path d="M0.8 0.6 H8 L11.2 3.8 V13.4 H0.8 Z" fill="none" stroke="#f20000" stroke-width="1.1" stroke-linejoin="round"/><path d="M7.6 0.8 V4.2 H11" fill="none" stroke="#f20000" stroke-width="0.8"/><path d="M2.8 11.2 Q4.8 9 5.5 6 Q5.8 4 5.7 3.5 Q5.9 7 8.8 8.8 Q9.8 9.4 9.1 9.1 Q7 8.7 4.8 10" fill="none" stroke="#f03a3a" stroke-width="0.7"/></svg><div class="cell" style="left:340px">47/14a- 8, AM<span class=el>...</span></div><div class="cell" style="left:440px">SEDIMENTOLOGY REPORT</div><div class="cell" style="left:1263px">SEDIMENTOL<span class=el>...</span></div></div>
<div class="a " style="left:1901px;top:215px;width:15px;height:702px;background:#fafafa"></div>
<svg class="a" style="left:1904px;top:223px" width="10" height="7" viewBox="0 0 10 7"><path d="M5 0 L10 7 H0 Z" fill="#8a8a8a"/></svg>
<div class="a " style="left:1904px;top:238px;width:9px;height:23px;background:#8a8a8a;border-radius:5px"></div>
<svg class="a" style="left:1904px;top:887px" width="10" height="7" viewBox="0 0 10 7"><path d="M0 0 H10 L5 7 Z" fill="#8a8a8a"/></svg>
<div class="a " style="left:485px;top:902px;width:1416px;height:15px;background:#fafafa"></div>
<svg class="a" style="left:492px;top:904px" width="8" height="10" viewBox="0 0 8 10"><path d="M8 0 V10 L0 5 Z" fill="#8a8a8a"/></svg>
<div class="a " style="left:508px;top:905.6px;width:1298px;height:8.4px;background:#8a8a8a;border-radius:4.2px"></div>
<svg class="a" style="left:1886px;top:904px" width="8" height="10" viewBox="0 0 8 10"><path d="M0 0 V10 L8 5 Z" fill="#8a8a8a"/></svg>
<div class="a " style="left:0px;top:917px;width:1920px;height:43px;background:#ebebeb"></div>
<svg class="a" style="left:10px;top:922px" width="32" height="36" viewBox="0 0 32 36"><rect x="-8.9" y="-8.9" width="17.8" height="17.8" rx="2.5" transform="translate(16.5,20.3) rotate(45)" fill="#ef572b"/><rect x="-7.9" y="-7.9" width="15.8" height="15.8" rx="2.5" transform="translate(16.5,12.5) rotate(45)" fill="#ebebeb"/><rect x="-6.95" y="-6.95" width="13.9" height="13.9" rx="2.2" transform="translate(16.5,12.5) rotate(45)" fill="#f6981f"/></svg>
<div class="t" style="left:47px;top:935px;font-size:12.4px;font-weight:bold;color:#4a4a4a">Copyright: Flare Solutions Limited, 2025. All rights reserved.</div>
<div class="t" style="left:892px;top:933px;font-size:12.8px;color:#606060">Powered by Flare Sirus.</div>
</body></html>
